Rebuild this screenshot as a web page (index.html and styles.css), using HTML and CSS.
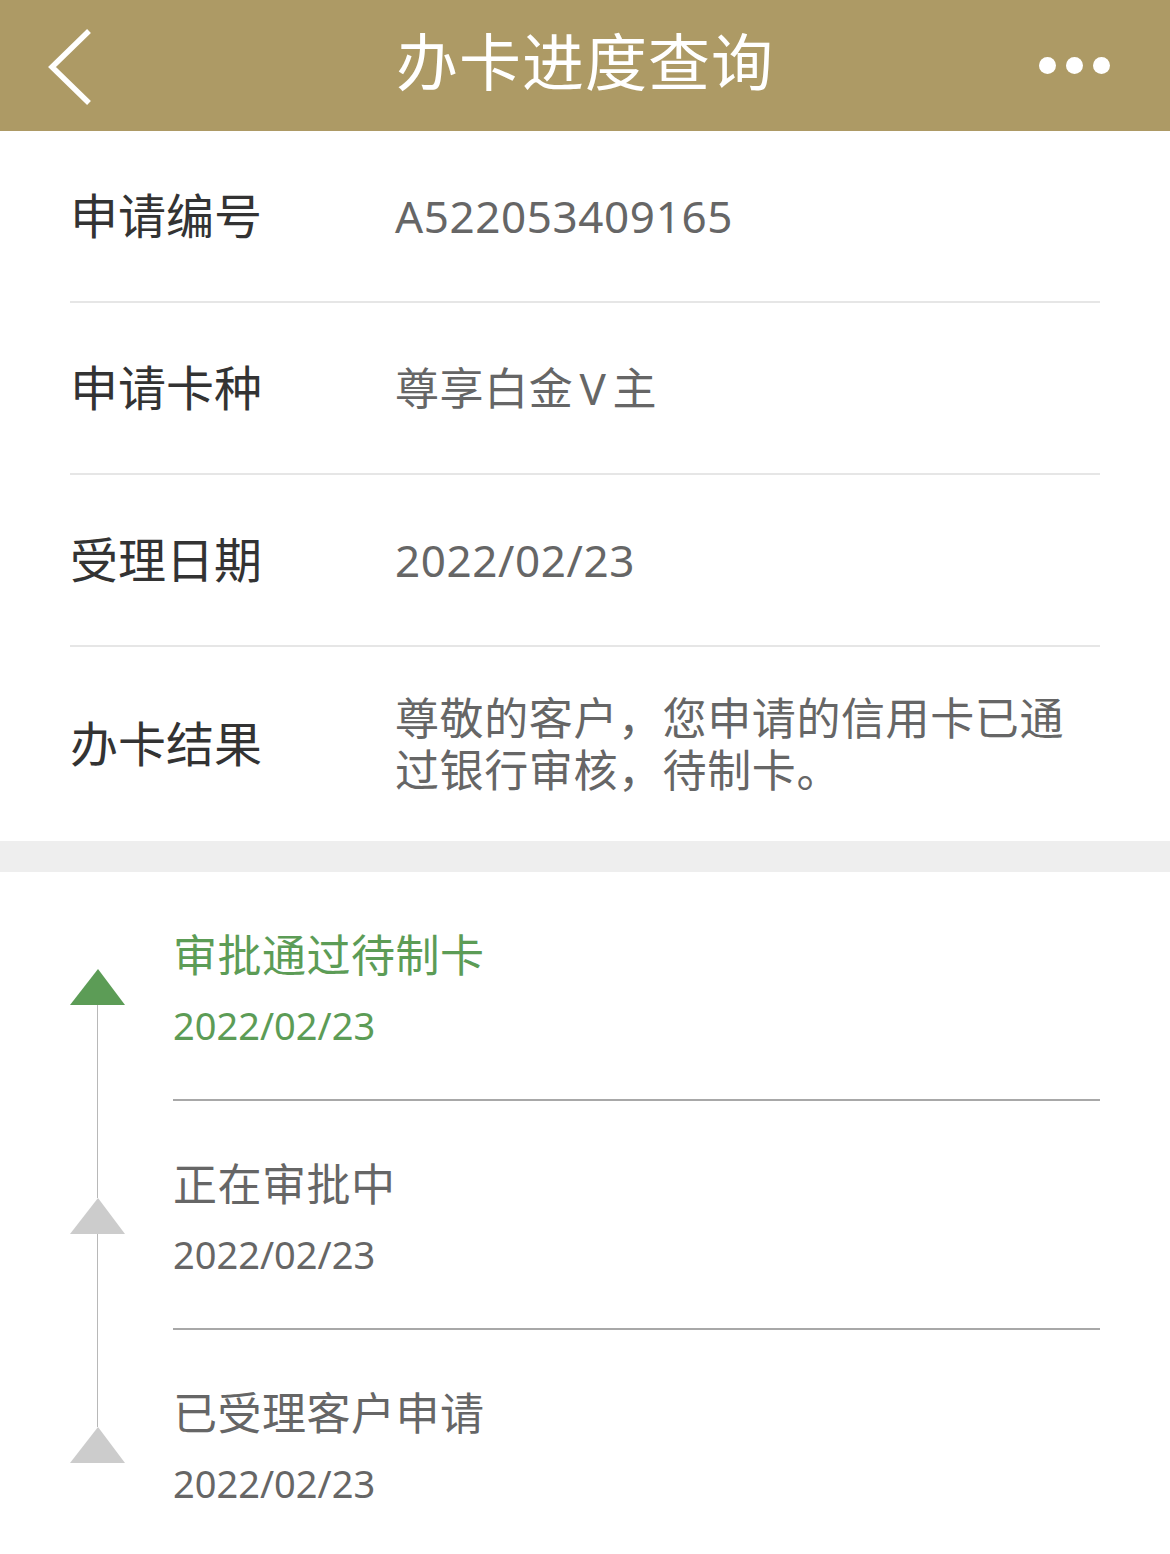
FILE: index.html
```html
<!DOCTYPE html>
<html lang="zh-CN">
<head>
  <meta charset="UTF-8">
  <meta name="viewport" content="width=device-width, initial-scale=1.0">
  <title>办卡进度查询</title>
  <link rel="stylesheet" href="styles.css">
</head>
<body>

<header class="topbar">
  <a class="back" href="#">
    <svg width="50" height="80" viewBox="0 0 50 80">
      <polyline points="43,3 6,39 43,75" fill="none" stroke="#fff" stroke-width="5.5"/>
    </svg>
  </a>
  <h1>办卡进度查询</h1>
  <div class="more"><span></span><span></span><span></span></div>
</header>

<div class="info">
  <div class="row">
    <div class="label">申请编号</div>
    <div class="value">A522053409165</div>
  </div>
  <div class="row">
    <div class="label">申请卡种</div>
    <div class="value">尊享白金<span class="latin">V</span>主</div>
  </div>
  <div class="row">
    <div class="label">受理日期</div>
    <div class="value">2022/02/23</div>
  </div>
  <div class="row">
    <div class="label">办卡结果</div>
    <div class="value">尊敬的客户，您申请的信用卡已通过银行审核，待制卡。</div>
  </div>
</div>

<div class="gap"></div>

<ul class="timeline">
  <li class="step done">
    <div class="marker"><i class="seg top"></i><i class="tri"></i><i class="seg"></i></div>
    <div class="body">
      <div class="title">审批通过待制卡</div>
      <div class="date">2022/02/23</div>
    </div>
  </li>
  <li class="step">
    <div class="marker"><i class="seg top"></i><i class="tri"></i><i class="seg"></i></div>
    <div class="body">
      <div class="title">正在审批中</div>
      <div class="date">2022/02/23</div>
    </div>
  </li>
  <li class="step">
    <div class="marker"><i class="seg top"></i><i class="tri"></i><i class="seg"></i></div>
    <div class="body">
      <div class="title">已受理客户申请</div>
      <div class="date">2022/02/23</div>
    </div>
  </li>
</ul>

</body>
</html>
```

FILE: styles.css
```css
/* 页面 */
body {
  margin: 0;
  background: #fff;
  font-family: "Noto Sans", "Noto Sans CJK SC", sans-serif;
  color: #333;
  overflow: hidden;
}

/* 顶部栏 */
.topbar {
  height: 131px;
  background: #ad9a65;
  display: flex;
  align-items: center;
  justify-content: space-between;
  padding: 0 60px 0 46px;
  box-sizing: border-box;
}

.back {
  display: flex;
  width: 50px;
  height: 80px;
  margin-top: 4px;
}

.topbar h1 {
  margin: 0 0 14px 14px;
  font-size: 62px;
  font-weight: normal;
  color: #fff;
  letter-spacing: 1px;
}

.more {
  display: flex;
  gap: 10px;
  width: 50px;
  justify-content: flex-end;
}

.more span {
  flex: none;
  width: 17px;
  height: 17px;
  border-radius: 50%;
  background: #fff;
}

/* 申请信息 */
.info {
  margin: 0 70px;
}

.row {
  display: flex;
  align-items: center;
  min-height: 172px;
  padding: 45px 0;
  box-sizing: border-box;
  border-bottom: 2px solid #e6e6e6;
}

.row:last-child {
  border-bottom: none;
  min-height: 194px;
}

.label {
  flex: none;
  width: 325px;
  font-size: 48px;
  line-height: 52px;
  color: #333;
}

.value {
  max-width: 685px;
  font-size: 44px;
  line-height: 52px;
  color: #666;
  letter-spacing: 0.6px;
}

.value .latin {
  padding: 0 6px;
}

.gap {
  height: 31px;
  background: #eeeeee;
}

/* 进度 */
.timeline {
  list-style: none;
  margin: 0;
  padding: 0 70px;
}

.step {
  display: flex;
  gap: 48px;
}

.marker {
  flex: none;
  width: 55px;
  display: flex;
  flex-direction: column;
  align-items: center;
}

.seg {
  width: 1px;
  flex: 1;
  background: #b8b8b8;
}

.seg.top {
  flex: none;
  height: 97px;
}

.step:first-child .seg.top,
.step:last-child .seg:last-child {
  visibility: hidden;
}

.tri {
  width: 0;
  height: 0;
  border-left: 28px solid transparent;
  border-right: 27px solid transparent;
  border-bottom: 36px solid #cccccc;
}

.step.done .tri {
  border-bottom-color: #5c9c56;
}

.body {
  flex: 1;
  padding: 53px 0 44px;
  border-bottom: 2px solid #a8a8a8;
}

.title {
  font-size: 44px;
  line-height: 60px;
  color: #666;
  letter-spacing: 0.5px;
}

.date {
  margin-top: 10px;
  font-size: 38px;
  line-height: 60px;
  color: #666;
}

.step.done .title,
.step.done .date {
  color: #5c9c56;
}
```
